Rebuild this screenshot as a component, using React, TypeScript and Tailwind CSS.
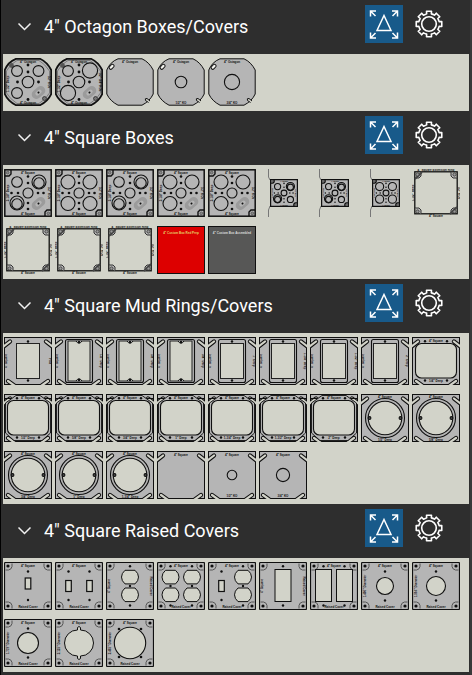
import { Fragment, type ReactNode } from 'react';

const PANEL = '#d2d3c9';
const METAL = '#b5b5b5';
const INK = '#101010';

type LabelProps = {
  children: string;
  x?: number;
  y?: number;
  turn?: number;
  fill?: string;
};

const Label = ({ children, x = 24, y = 4, turn = 0, fill = INK }: LabelProps) => (
  <text
    x={x}
    y={y}
    fill={fill}
    textAnchor="middle"
    transform={`rotate(${turn} ${x} ${y})`}
    className="font-['Liberation_Sans',sans-serif] text-[3px] font-bold"
  >
    {children}
  </text>
);

const Dots = ({ at, r = 1 }: { at: number[][]; r?: number }) => (
  <>
    {at.map(([x, y]) => (
      <circle key={`${x}-${y}`} cx={x} cy={y} r={r} fill={INK} />
    ))}
  </>
);

// each ring is [cx, cy, r]
const Rings = ({ at, fill = 'none' }: { at: number[][]; fill?: string }) => (
  <>
    {at.map(([x, y, r]) => (
      <circle key={`${x}-${y}-${r}`} cx={x} cy={y} r={r} fill={fill} stroke={INK} strokeWidth="1.1" />
    ))}
  </>
);

const Clamp = () => (
  <g transform="rotate(-40 34.5 34.5)">
    <rect x="27" y="30" width="15" height="9" rx="4.5" fill="#9b9b9b" />
    <rect x="31" y="32.5" width="7" height="4" rx="2" fill={METAL} />
    <circle cx="34.5" cy="34.5" r="1" fill={INK} />
  </g>
);

const Octagon = ({ heavy, children }: { heavy?: boolean; children?: ReactNode }) => (
  <>
    <path
      d="M12 .8H36Q43 4 47.2 12V36Q44 43 36 47.2H12Q4 43 .8 36V12Q4 4 12 .8Z"
      fill={METAL}
      stroke={INK}
      strokeWidth={heavy ? 1.8 : 1}
    />
    <Label y={4.5}>4" Octagon</Label>
    {children}
  </>
);

const OctagonBox = ({ rings, side }: { rings: number[][]; side: string }) => (
  <Octagon heavy>
    <path
      d="M13 2.5H35Q41 6 45.5 13V35Q42 41 35 45.5H13Q6 41 2.500 35V13Q6 6 13 2.500Z"
      fill="none"
      stroke="#555"
      strokeWidth=".6"
    />
    <circle cx="7.5" cy="7.5" r="2.4" fill="#555" />
    <circle cx="40.5" cy="40.5" r="2" fill="#777" stroke={INK} strokeWidth=".6" />
    <Clamp />
    <Rings at={rings} />
    <Rings at={[[24, 24, 5.8]]} />
    <Dots at={[[24, 7], [24, 14], [13.5, 24], [34.5, 24], [24, 41.5]]} r={1.4} />
    <Label x={5} y={26} turn={-90}>1-1/2" Deep</Label>
    <Label x={44} y={24} turn={90}>{side}</Label>
    <Label y={46}>4" Octagon</Label>
  </Octagon>
);

const OctagonCover = ({ knockout, note }: { knockout?: number; note?: string }) => (
  <Octagon>
    <rect
      x="2.8"
      y="7.2"
      width="5.6"
      height="3.2"
      rx="1.5"
      fill="#f5f5f0"
      stroke={INK}
      transform="rotate(-45 5.6 8.8)"
    />
    <path d="M42.5 44.500 39.5 42.5Q38.500 40 41 40.500L44 43" fill={PANEL} stroke={INK} />
    {knockout && <Rings at={[[24, 24, knockout]]} />}
    {note && <Label y={46}>{note}</Label>}
  </Octagon>
);

const SquareBox = ({ rings, clamp }: { rings: number[][]; clamp?: boolean }) => (
  <>
    <rect x=".8" y=".8" width="46.4" height="46.4" fill={METAL} stroke={INK} strokeWidth="1.5" />
    <path d="M7 1V5L5 7H1M47 41H43L41 43V47" fill="none" stroke={INK} strokeWidth="1.4" />
    <circle cx="3.7" cy="3.7" r="1.4" fill="#888" stroke="#444" strokeWidth=".6" />
    <circle cx="44.3" cy="44.3" r="1.4" fill="#888" stroke="#444" strokeWidth=".6" />
    {clamp && <Clamp />}
    <Rings at={rings} />
    <Rings at={[[24, 24, 5]]} />
    <Dots
      at={[[24, 7.5], [24, 14], [7.5, 24], [14, 24], [34, 24], [39.5, 24], [24, 34], [24, 40]]}
      r={1.3}
    />
    <Label y={5}>4" Square</Label>
    <Label y={45.5}>4" Square</Label>
    <Label x={5} y={24} turn={-90}>2-1/8" Deep</Label>
    <Label x={43.5} y={24} turn={90}>1/2" KOs</Label>
  </>
);

const mixed = [[13, 13, 5.3], [35, 13, 7], [35, 14, 5.2], [13, 34, 7], [13, 35, 5.2]];
const large = [[13, 13, 7], [35, 13, 7], [13, 34.5, 7]];

// small box on its mounting bracket, lines keep their full weight
const Bracketed = ({ children }: { children: ReactNode }) => (
  <>
    <path d="M9.5 0V8L11 11M11 37 9.5 41V48" fill="none" stroke="#777" />
    <svg
      x="11"
      y="10"
      width="28"
      height="28"
      viewBox="0 0 48 48"
      className="[&_*]:[vector-effect:non-scaling-stroke]"
    >
      {children}
    </svg>
  </>
);

const Extension = () => (
  <>
    <rect x="2.8" y="2.8" width="42.4" height="42" fill="none" stroke={INK} strokeWidth="1.3" />
    <path
      d="M3 9H7L9 7V3M39 3V7L41 9H45M3 39H7L9 41V45M39 45V41L41 39H45"
      fill={METAL}
      stroke="#333"
    />
    <path d="M3 10 10 3M38 45 45 38" stroke="#444" strokeWidth="1.8" />
    <g fill="#999" stroke="#333" strokeWidth=".8">
      <circle cx="5.5" cy="5.5" r="1.6" />
      <circle cx="42.5" cy="5.5" r="1.6" />
      <circle cx="5.5" cy="42.5" r="1.6" />
      <circle cx="42.5" cy="42.5" r="1.6" />
    </g>
    <Label y={2}>4" Square Extension Ring</Label>
    <Label y={48}>4" Square</Label>
    <Label x={1.8} y={24} turn={-90}>1-1/2" Deep</Label>
    <Label x={46} y={24} turn={90}>1/2" KOs</Label>
  </>
);

const Custom = ({ fill, ink, note }: { fill: string; ink: string; note: string }) => (
  <>
    <rect x=".5" y=".5" width="47" height="47" fill={fill} stroke={INK} />
    <Label y={7.5} fill={ink}>{note}</Label>
  </>
);

const slots = 'M-1 10 6 4.5M49 10 42 4.5M11 49 4 44M37 49 44 44';

const RingPlate = ({ children }: { children?: ReactNode }) => (
  <>
    <rect x=".5" y=".5" width="47" height="47" fill={METAL} stroke={INK} />
    <path d={slots} fill="none" stroke={INK} strokeWidth="4.2" strokeLinecap="round" />
    <path d={slots} fill="none" stroke={PANEL} strokeWidth="2.2" strokeLinecap="round" />
    {children}
  </>
);

const OneGang = ({ style, depth }: { style: 'flat' | 'screw' | 'frame'; depth: string }) => (
  <RingPlate>
    {style !== 'flat' && (
      <rect x="10.5" y="2.5" width="27" height="43" rx="2" fill={METAL} stroke={INK} strokeWidth="1.1" />
    )}
    {style === 'screw' ? (
      <>
        <rect x="13" y="4" width="22" height="40" fill={PANEL} stroke="#222" />
        <path d="M21 4Q24 8.5 27 4M21 44Q24 39.5 27 44" fill={METAL} stroke={INK} />
        <Dots at={[[24, 5], [24, 43]]} r={1.2} />
      </>
    ) : (
      <>
        <rect x="12.5" y="6.5" width="23" height="35" fill={PANEL} stroke="#222" />
        <Dots at={[[24, 4.5], [24, 43.5]]} r={1.2} />
      </>
    )}
    <Label x={3} y={24} turn={-90}>4" Square</Label>
    <Label x={45} y={24} turn={90}>{depth}</Label>
  </RingPlate>
);

const TwoGang = ({ depth, raised }: { depth: string; raised?: boolean }) => (
  <RingPlate>
    {raised && (
      <>
        <path d="M0 4.5H14M34 4.5H48" stroke={INK} />
        <path
          d="M12 1.5H36L46.5 9V39L38 46.5H10L1.5 39V9Z"
          fill={METAL}
          stroke={INK}
          strokeWidth=".9"
        />
      </>
    )}
    <rect x="3.5" y="6.5" width="41" height="34.5" rx="6" fill={PANEL} stroke={INK} strokeWidth="1.1" />
    <Dots at={[[13, 4.3], [35, 4.3], [13, 43.5], [35, 43.5]]} r={1.2} />
    <Label y={5.3}>4" Square</Label>
    <Label y={44.8}>{depth}</Label>
  </RingPlate>
);

const RoundRing = ({ depth }: { depth: string }) => (
  <RingPlate>
    <Rings at={[[24, 24, 19.5]]} fill={METAL} />
    <Rings at={[[24, 24, 16.8]]} fill={PANEL} />
    <Rings at={[[8.5, 24, 1.4], [39.5, 24, 1.4]]} fill="#555" />
    <Label y={3.8}>4" Square</Label>
    <Label y={46.6}>{depth}</Label>
  </RingPlate>
);

const FlatCover = ({ knockout, note }: { knockout?: number; note?: string }) => (
  <RingPlate>
    {knockout && <Rings at={[[24, 24, knockout]]} />}
    <Label y={5}>4" Square</Label>
    {note && <Label y={45.5}>{note}</Label>}
  </RingPlate>
);

const Raised = ({ children, sides, left }: { children: ReactNode; sides?: boolean; left?: string }) => (
  <>
    <rect x=".5" y=".5" width="47" height="47" rx="1" fill={METAL} stroke={INK} strokeWidth="1.2" />
    <path
      d="M8 1.5V4.5Q7.5 7.5 4.5 8H1.5M40 1.5V4.5Q40.5 7.5 43.5 8H46.5M8 46.5V43.5Q7.5 40.5 4.5 40H1.5M40 46.5V43.5Q40.5 40.5 43.5 40H46.5"
      fill="none"
      stroke="#555"
    />
    <Dots at={[[4, 4], [44, 4], [4, 44], [44, 44]]} r={1.6} />
    {children}
    {sides ? (
      <>
        <Label x={4} y={24} turn={-90}>4" Square</Label>
        <Label x={44} y={24} turn={90}>Raised Cover</Label>
      </>
    ) : (
      <>
        <Label y={4.5}>4" Square</Label>
        <Label y={46}>Raised Cover</Label>
      </>
    )}
    {left && <Label x={5} y={24} turn={-90}>{left}</Label>}
  </>
);

const Toggle = ({ x, y }: { x: number; y: number }) => (
  <>
    <rect x={x - 2.8} y={y - 5.5} width="5.6" height="11" fill={PANEL} stroke={INK} strokeWidth="1.2" />
    <Dots at={[[x, 9.5], [x, 38]]} r={1.2} />
  </>
);

const Duplex = ({ x }: { x: number }) => (
  <>
    {[8.3, 26].map((y) => (
      <path
        key={y}
        d={`M${x - 5} ${y}h10q3.5 3 3.5 6.8t-3.5 6.8h-10q-3.5-3-3.5-6.8t3.5-6.8z`}
        fill={PANEL}
        stroke={INK}
      />
    ))}
    <Dots at={[[x, 4.2], [x, 24], [x, 43.5]]} r={1.2} />
  </>
);

const Rocker = ({ x }: { x: number }) => (
  <>
    <rect x={x - 8} y="7.5" width="16" height="32" fill={PANEL} stroke={INK} />
    <Dots at={[[x, 4.2], [x, 43.5]]} r={1.2} />
  </>
);

const Receptacle = ({ r, left }: { r: number; left: string }) => (
  <Raised left={left}>
    <Rings at={[[24, 24, r]]} fill={PANEL} />
    <Dots at={[[24, 9.5], [24, 38.5]]} r={1.2} />
  </Raised>
);

const sections: { title: string; tiles: ReactNode[] }[] = [
  {
    title: '4" Octagon Boxes/Covers',
    tiles: [
      <OctagonBox rings={[[13, 13, 5.4], [34.5, 13, 5.4], [13, 35, 5.4]]} side={'1/2" KOs'} />,
      <OctagonBox rings={[[13, 13, 5.4], [35, 12.5, 7.6], [13, 35, 7.6]]} side={'1/2" 3/4" KOs'} />,
      <OctagonCover />,
      <OctagonCover knockout={5.8} note={'1/2" KO'} />,
      <OctagonCover knockout={7.6} note={'3/4" KO'} />,
    ],
  },
  {
    title: '4" Square Boxes',
    tiles: [
      <SquareBox rings={mixed} clamp />,
      <SquareBox rings={[...large, [35, 34.5, 7]]} />,
      <SquareBox rings={mixed} clamp />,
      <SquareBox rings={large} clamp />,
      <SquareBox rings={large} clamp />,
      <Bracketed><SquareBox rings={[...mixed, [35, 35, 5.3]]} /></Bracketed>,
      <Bracketed><SquareBox rings={[...mixed, [35, 35, 5.3]]} /></Bracketed>,
      <Bracketed><SquareBox rings={[...large, [35, 34.5, 7]]} /></Bracketed>,
      <Extension />,
      <Extension />,
      <Extension />,
      <Extension />,
      <Custom fill="#dd0000" ink="#e5d36a" note={'4" Custom Box Red Prep'} />,
      <Custom fill="#575756" ink="#dddddd" note={'4" Custom Box Assembled'} />,
    ],
  },
  {
    title: '4" Square Mud Rings/Covers',
    tiles: [
      <OneGang style="flat" depth="Flat" />,
      <OneGang style="screw" depth={'1/2" Deep'} />,
      <OneGang style="screw" depth={'5/8" Deep'} />,
      <OneGang style="screw" depth={'3/4" Deep'} />,
      <OneGang style="frame" depth={'1" Deep'} />,
      <OneGang style="frame" depth={'1-1/4" Deep'} />,
      <OneGang style="frame" depth={'1-1/2" Deep'} />,
      <OneGang style="frame" depth={'2" Deep'} />,
      <TwoGang depth={'1/4" Deep'} />,
      <TwoGang depth={'1/2" Deep'} raised />,
      <TwoGang depth={'5/8" Deep'} raised />,
      <TwoGang depth={'3/4" Deep'} raised />,
      <TwoGang depth={'1" Deep'} raised />,
      <TwoGang depth={'1-1/4" Deep'} raised />,
      <TwoGang depth={'1-1/2" Deep'} raised />,
      <TwoGang depth={'2" Deep'} raised />,
      <RoundRing depth={'1/2" Deep'} />,
      <RoundRing depth={'5/8" Deep'} />,
      <RoundRing depth={'3/4" Deep'} />,
      <RoundRing depth={'1" Deep'} />,
      <RoundRing depth={'1-1/4" Deep'} />,
      <FlatCover />,
      <FlatCover knockout={4.8} note={'1/2" KO'} />,
      <FlatCover knockout={6.6} note={'3/4" KO'} />,
    ].filter(Boolean),
  },
  {
    title: '4" Square Raised Covers',
    tiles: [
      <Raised><Toggle x={24} y={21.5} /></Raised>,
      <Raised><Toggle x={13.5} y={24} /><Toggle x={34.5} y={24} /></Raised>,
      <Raised sides><Duplex x={24} /></Raised>,
      <Raised><Duplex x={13.5} /><Duplex x={35} /></Raised>,
      <Raised><Toggle x={13.5} y={24} /><Duplex x={35} /></Raised>,
      <Raised sides><Rocker x={24} /></Raised>,
      <Raised><Rocker x={13.5} /><Rocker x={34.5} /></Raised>,
      <Receptacle r={8.5} left={'1.406" Diameter'} />,
      <Receptacle r={9.5} left={'1.594" Diameter'} />,
      <Receptacle r={10.5} left={'1.719" Diameter'} />,
      <Raised left={'2.125" Diameter'}>
        <path
          d="M22.5 11V8.5Q24 6.5 25.5 8.5V11A13 13 0 0 1 25.5 37V39.5Q24 41.5 22.5 39.5V37A13 13 0 0 1 22.5 11Z"
          fill={PANEL}
          stroke={INK}
        />
      </Raised>,
      <Raised left={'2.465" Diameter'}>
        <Dots at={[[13, 10], [35, 10], [13, 38], [35, 38]]} r={1.3} />
        <Rings at={[[24, 24, 15.7]]} fill={PANEL} />
      </Raised>,
    ],
  },
];

// eight square teeth around a 13px radius
const gearPath =
  Array.from({ length: 8 }, (_, i) =>
    [[-13, 10.4], [-11, 13], [11, 13], [13, 10.4]]
      .map(([offset, r]) => {
        const a = ((i * 45 + offset) * Math.PI) / 180;
        return `${(14 + r * Math.sin(a)).toFixed(2)} ${(14 - r * Math.cos(a)).toFixed(2)}`;
      })
      .join('L')
  )
    .map((tooth, i) => (i ? `A10.4 10.4 0 0 1 ${tooth}` : `M${tooth}`))
    .join('') + 'Z';

const SectionHeader = ({ title }: { title: string }) => (
  <header className="flex h-[54px] items-center pl-[14px] pr-[26px]">
    <button type="button" aria-expanded="true" className="flex min-w-0 flex-1 items-center gap-3 text-left">
      <svg width="15" height="10" viewBox="0 0 15 10" fill="none" stroke="#f0f0f0" strokeWidth="1.5">
        <path d="M1.5 1.5 7.5 7.5 13.5 1.5" />
      </svg>
      <h2 className="truncate text-[18px] leading-6 text-white">{title}</h2>
    </button>
    <button
      type="button"
      aria-label="Fit to view"
      className="mb-[6px] mr-3 h-[38px] w-[38px] shrink-0 bg-[#185a8a]"
    >
      <svg width="38" height="38" viewBox="0 0 38 38" fill="none" stroke="white" strokeWidth="1.5">
        <path d="M5.5 11.5V6H11M5.5 6 10.5 11M27 6H32.5V11.5M32.5 6 27.5 11M5.5 27.500V33H11M5.5 33 10.5 28M27 33H32.5V27.500M32.5 33 27.5 28" />
        <path d="M19 10.5 26 25.5H12Z" />
      </svg>
    </button>
    <button type="button" aria-label="Settings" className="mb-[7px] shrink-0">
      <svg width="28" height="28" viewBox="0 0 28 28" fill="none" stroke="white" strokeWidth="1.6" strokeLinejoin="round">
        <path d={gearPath} />
        <circle cx="14" cy="14" r="7.3" />
      </svg>
    </button>
  </header>
);

export default function App() {
  return (
    <main className="min-h-screen border-l border-r-2 border-l-black border-r-[#393939] bg-[#2e2e2e] pl-[2px] pr-px font-[Roboto,sans-serif]">
      {sections.map(({ title, tiles }) => (
        <Fragment key={title}>
          <SectionHeader title={title} />
          <div className="flex flex-wrap gap-x-[3px] gap-y-[9px] bg-[#d2d3c9] pb-[5px] pl-px pt-1">
            {tiles.map((tile, i) => (
              <button key={i} type="button" className="h-12 w-12">
                <svg width="48" height="48" viewBox="0 0 48 48">
                  {tile}
                </svg>
              </button>
            ))}
          </div>
        </Fragment>
      ))}
    </main>
  );
}
